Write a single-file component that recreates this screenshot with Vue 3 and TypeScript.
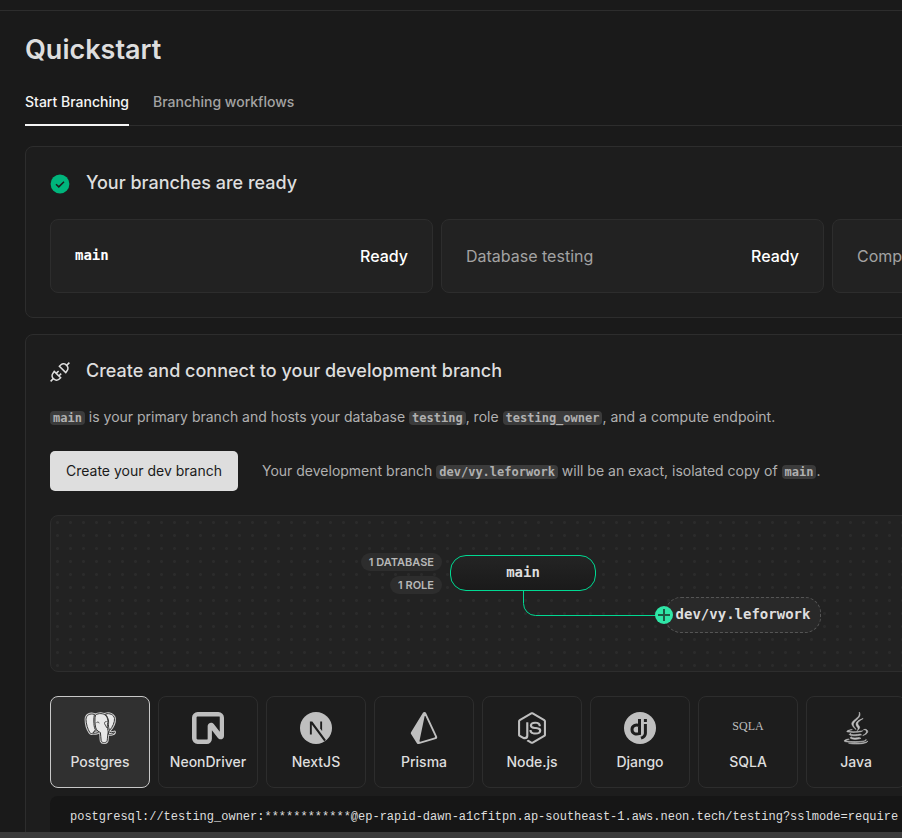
<script setup lang="ts">
import { ref } from 'vue'

interface BranchStatus {
  label: string
  mono: boolean
  status: string
}

const statuses: BranchStatus[] = [
  { label: 'main', mono: true, status: 'Ready' },
  { label: 'Database testing', mono: false, status: 'Ready' },
  { label: 'Compute', mono: false, status: 'Ready' },
]

const tabs: string[] = ['Start Branching', 'Branching workflows']
const activeTab = ref(tabs[0])

const drivers: string[] = ['Postgres', 'NeonDriver', 'NextJS', 'Prisma', 'Node.js', 'Django', 'SQLA', 'Java']
const activeDriver = ref(drivers[0])

const connection =
  'postgresql://testing_owner:************@ep-rapid-dawn-a1cfitpn.ap-southeast-1.aws.neon.tech/testing?sslmode=require'
</script>

<template>
  <div class="page">
    <header class="topbar"></header>
    <main class="viewport">
      <div class="content">
        <h1>Quickstart</h1>
        <nav class="tabs">
          <button
            v-for="tab in tabs"
            :key="tab"
            type="button"
            class="tab"
            :class="{ active: tab === activeTab }"
            @click="activeTab = tab"
          >{{ tab }}</button>
        </nav>

        <section class="panel">
          <h2>
            <svg class="head-icon" viewBox="0 0 20 20" aria-hidden="true">
              <circle cx="10" cy="11" r="9.4" fill="#00b57c" />
              <path d="M6 11.2l2.8 2.7 5.2-5.2" fill="none" stroke="#1c1c1c" stroke-width="1.5" />
            </svg>
            Your branches are ready
          </h2>
          <div class="statuses">
            <div v-for="item in statuses" :key="item.label" class="status">
              <span :class="item.mono ? 'mono-label' : 'label'">{{ item.label }}</span>
              <span class="state">{{ item.status }}</span>
            </div>
          </div>
        </section>

        <section class="panel">
          <h2>
            <svg class="head-icon" viewBox="0 0 20 20" fill="none" stroke="#dedede" stroke-width="1.5" aria-hidden="true">
              <g transform="translate(0 1)">
                <path d="M.6 19.4l3-3M16.4 3.6l3-3" />
                <path d="M4.2 9.4l6.400 6.400-1.600 1.400a3.800 3.800 0 0 1-5.400-.4 3.800 3.800 0 0 1-.6-5.600z" />
                <path d="M15.800 10.600L9.400 4.200l1.600-1.400a3.800 3.800 0 0 1 5.400.4 3.800 3.800 0 0 1 .6 5.600z" />
                <path d="M6.200 11.400l2.400-2.400M8.800 14l2.400-2.400" />
              </g>
            </svg>
            Create and connect to your development branch
          </h2>
          <p class="intro">
            <code>main</code> is your primary branch and hosts your database <code>testing</code>, role
            <code>testing_owner</code>, and a compute endpoint.
          </p>
          <div class="action">
            <button type="button" class="primary">Create your dev branch</button>
            <p>
              Your development branch <code>dev/vy.leforwork</code> will be an exact, isolated copy of
              <code>main</code>.
            </p>
          </div>

          <div class="diagram">
            <svg class="edge" viewBox="0 0 142 28" aria-hidden="true">
              <path d="M.5 0v12.500a12 12 0 0 0 12 12H142" fill="none" stroke="#00d992" />
            </svg>
            <div class="badges">
              <span class="badge">1 DATABASE</span>
              <span class="badge">1 ROLE</span>
            </div>
            <div class="node root">main</div>
            <div class="node dev">dev/vy.leforwork</div>
            <svg class="plus" viewBox="0 0 18 18" aria-hidden="true">
              <circle cx="9" cy="9" r="9" fill="#2fe6a7" />
              <path d="M9 3v12M3 9h12" stroke="#1f5a45" stroke-width="2" />
            </svg>
          </div>

          <div class="drivers">
            <button
              v-for="driver in drivers"
              :key="driver"
              type="button"
              class="driver"
              :class="{ selected: driver === activeDriver }"
              @click="activeDriver = driver"
            >
              <svg v-if="driver === 'Postgres'" viewBox="0 0 32 32" aria-hidden="true">
                <defs>
                  <g id="elephant">
                    <path d="M10.500 2.500C6 1 2 3 2 7.500c0 4 1.800 10 3.800 13 1.200 1.600 2.600 1.200 3.800-.3l1.800-2.400C9.800 15 10 12 9.800 9c0-3 .2-4.500.7-6.500z" />
                    <path d="M21.500 2c4-1.200 8.500.8 9 4.500.3 3.500-1.800 8.500-5 12-.6-2-1.200-3.800-1-6 .3-3 .2-6-3-10.500z" />
                    <path d="M24.500 19.500c2 1.500 4 1.300 6 .5.400 1.500-3.500 2.800-6 2.300z" />
                    <path d="M10.500 19.500c1.200-.6 3-1 4.500-.2.4 1.200-2.700 2.200-6 1.900z" />
                    <path d="M11.500 3c3-2 8-2 10.500.8 2.200 2.600 2.200 6 1.400 9-.5 2.500.6 5 .8 7.200-.6 2-.6 5.500-1 8.500-.3 2.500-5 3-6 .4-.6-2.500-.2-6-.8-8.400-1.400-.8-3.600-1.600-4.600-4.500-.9-3.600-1.300-10-.3-13z" />
                  </g>
                </defs>
                <use href="#elephant" fill="#e8e8e8" stroke="#d0d0d0" stroke-width="2.800" stroke-linejoin="round" />
                <use href="#elephant" fill="#e8e8e8" stroke="#383838" stroke-width="1" stroke-linejoin="round" />
                <path d="M12.500 10.500c1.300-.8 2.500-.3 2.700.8M22.600 9.500c-1.400.1-2.300.8-2.100 2 .4 1.800 1.800 2.900 2.600 4.500" fill="none" stroke="#383838" stroke-width=".9" />
              </svg>
              <svg v-else-if="driver === 'NeonDriver'" viewBox="0 0 32 32" fill="#bfbfbf" aria-hidden="true">
                <path fill-rule="evenodd" d="M0 5.650A5.650 5.650 0 0 1 5.650 0h20.700A5.650 5.650 0 0 1 32 5.650v18.300c0 3.200-4.100 4.600-6.100 2.100l-6-7.700v8.500A5.100 5.100 0 0 1 14.800 32H5.650A5.650 5.650 0 0 1 0 26.350zM5.650 4.500c-.6 0-1.100.5-1.100 1.100v20.700c0 .6.5 1.100 1.100 1.100h9.600c.3 0 .4-.2.4-.5V14.100c0-3.200 4.100-4.600 6.100-2.100l6 7.700V5.650c0-.6.050-1.150-.6-1.150z" />
              </svg>
              <svg v-else-if="driver === 'NextJS'" viewBox="0 0 32 32" aria-hidden="true">
                <circle cx="16" cy="16" r="16" fill="#bfbfbf" />
                <path d="M9.900 9.600h2.400l13.600 18.300-1.700 1.300L11.800 12.600v10H9.900z" fill="#1e1e1e" />
                <path d="M20.200 9.600h1.900v9.400l-1.900-2.600z" fill="#1e1e1e" />
              </svg>
              <svg v-else-if="driver === 'Prisma'" viewBox="0 0 24 24" fill="#bfbfbf" aria-hidden="true">
                <path d="M21.8068 18.2848L13.5528.7565c-.207-.4382-.639-.7273-1.1286-.7541-.5023-.0293-.9523.213-1.2062.6253L2.266 15.1271c-.2773.4518-.2718 1.0091.0158 1.4555l4.3759 6.7786c.2608.4046.7127.6388 1.1823.6388.1332 0 .267-.0188.3987-.0577l12.7019-3.7568c.3891-.1151.7072-.3904.8737-.7553s.1633-.7828-.0075-1.1454zm-1.8481.7519L9.1814 22.2242c-.3292.0975-.6448-.1873-.5756-.5194l3.8501-18.4386c.072-.3448.5486-.3996.699-.0803l7.1288 15.1382c.1344.2856-.019.6224-.325.7128z" />
              </svg>
              <svg v-else-if="driver === 'Node.js'" viewBox="0 0 448 512" fill="#bfbfbf" aria-hidden="true">
                <path d="M224 508c-6.700 0-13.500-1.800-19.400-5.200l-61.700-36.500c-9.200-5.200-4.700-7-1.700-8 12.300-4.300 14.800-5.200 27.900-12.700 1.400-.8 3.200-.5 4.600.4l47.400 28.100c1.700 1 4.100 1 5.700 0l184.700-106.600c1.700-1 2.800-3 2.800-5V149.300c0-2.100-1.100-4-2.900-5.100L226.800 37.700c-1.700-1-4-1-5.700 0L36.600 144.300c-1.800 1-2.900 3-2.900 5.100v213.100c0 2 1.100 4 2.900 4.900l50.600 29.200c27.500 13.700 44.300-2.400 44.300-18.700V167.500c0-3 2.400-5.300 5.400-5.300h23.400c2.900 0 5.400 2.300 5.400 5.300V378c0 36.600-20 57.600-54.700 57.600-10.700 0-19.100 0-42.500-11.600l-48.400-27.900C8.100 389.200.7 376.300.7 362.400V149.300c0-13.800 7.400-26.800 19.400-33.700L204.600 9c11.700-6.600 27.200-6.600 38.800 0l184.700 106.700c12 6.900 19.400 19.800 19.400 33.700v213.100c0 13.800-7.400 26.700-19.400 33.700L243.400 502.800c-5.900 3.400-12.600 5.200-19.400 5.200zm149.100-210.100c0-39.900-27-50.500-83.700-58-57.400-7.600-63.200-11.500-63.200-24.900 0-11.100 4.900-25.900 47.400-25.900 37.900 0 51.900 8.200 57.700 33.800.5 2.400 2.700 4.200 5.200 4.200h24c1.500 0 2.900-.6 3.900-1.700s1.500-2.600 1.400-4.100c-3.700-44.100-33-64.600-92.200-64.600-52.700 0-84.100 22.200-84.100 59.500 0 40.400 31.300 51.600 81.800 56.600 60.500 5.900 65.200 14.800 65.200 26.700 0 20.600-16.600 29.400-55.500 29.400-48.900 0-59.600-12.300-63.200-36.600-.4-2.600-2.600-4.500-5.300-4.500h-23.900c-3 0-5.300 2.400-5.300 5.300 0 31.100 16.900 68.200 97.800 68.200 58.400-.1 92-23.200 92-63.400z" />
              </svg>
              <svg v-else-if="driver === 'Django'" viewBox="0 0 32 32" aria-hidden="true">
                <circle cx="16" cy="16" r="16" fill="#bfbfbf" />
                <g fill="none" stroke="#1e1e1e" stroke-width="3">
                  <path d="M15.500 7v14.600c-3.500.9-7.500.4-7.500-4.100 0-4 3.600-5.200 7.500-4" />
                  <path d="M21.400 12v9.200c0 2.900-1.400 3.900-4.400 5" />
                  <path d="M21.400 7v3" />
                </g>
              </svg>
              <svg v-else-if="driver === 'SQLA'" viewBox="0 0 32 32" aria-hidden="true">
                <text x="16" y="18" text-anchor="middle" class="sqla">SQLA</text>
              </svg>
              <svg v-else viewBox="0 0 384 512" fill="#bfbfbf" stroke="#bfbfbf" stroke-width="9" aria-hidden="true">
                <path d="M277.740 312.900c9.800-6.700 23.400-12.500 23.400-12.500s-38.700 7-77.200 10.200c-47.100 3.900-97.700 4.700-123.100 1.300-60.100-8 33-30.100 33-30.100s-36.100-2.400-80.600 19c-52.500 25.400 130 37 224.500 12.100zm-85.400-32.100c-19-42.700-83.100-80.200 0-145.800C296 53.200 242.840 0 242.840 0c21.500 84.500-75.600 110.100-110.700 162.600-23.900 35.900 11.700 74.400 60.200 118.200zm114.600-176.200c.1 0-175.200 43.800-91.500 140.200 24.700 28.400-6.500 54-6.500 54s62.700-32.400 33.900-72.900c-26.900-37.800-47.500-56.600 64.100-121.300zm-6.100 270.500a12.190 12.190 0 0 1-2 2.600c128.300-33.700 81.100-118.900 19.800-97.300a17.330 17.330 0 0 0-8.200 6.300 70.450 70.450 0 0 1 11-3c31-6.500 75.500 41.500-20.600 91.400zM348 437.400s14.500 11.900-15.900 21.200c-57.900 17.500-240.800 22.800-291.600.7-18.300-7.900 16-19 26.800-21.300 11.200-2.400 17.700-2 17.700-2-20.300-14.300-131.300 28.100-56.400 40.200C232.840 509.400 401 461.300 348 437.400zM124.440 396c-78.700 22 47.900 67.400 148.100 24.500a185.890 185.890 0 0 1-28.200-13.800c-44.700 8.500-65.400 9.100-106 4.500-33.500-3.800-13.900-15.200-13.900-15.200zm179.800 97.200c-78.700 14.800-175.800 13.100-233.300 3.600 0-.1 11.800 9.700 72.400 13.600 92.200 5.900 233.800-3.300 237.100-46.900 0 0-6.400 16.500-76.200 29.700zM260.640 353c-59.200 11.400-93.500 11.100-136.800 6.600-33.500-3.500-11.600-19.700-11.600-19.700-86.800 28.800 48.200 61.400 169.500 25.900a60.370 60.370 0 0 1-21.100-12.800z" />
              </svg>
              <span>{{ driver }}</span>
            </button>
          </div>

          <pre class="connection">{{ connection }}</pre>
        </section>
      </div>
    </main>
    <footer class="strip"></footer>
  </div>
</template>

<style>
body {
  background: #1a1a1a;
}
</style>

<style scoped>
.page {
  --sans: Inter, "Liberation Sans", sans-serif;
  --mono: "DejaVu Sans Mono", "Liberation Mono", monospace;
  --line: #2d2d2d;
  display: flex;
  flex-direction: column;
  height: 100vh;
  overflow: hidden;
  background: #1a1a1a;
  color: #dedede;
  font: 14px/20px var(--sans);
}

.page *,
.page *::before {
  box-sizing: border-box;
}

button {
  margin: 0;
  font: inherit;
  cursor: pointer;
}

h1,
h2,
p,
pre {
  margin: 0;
}

.topbar {
  flex: none;
  height: 11px;
  border-bottom: 1px solid var(--line);
}

.viewport {
  flex: 1;
  min-height: 0;
  overflow: hidden;
}

.content {
  min-width: 1264px;
  padding: 20px 24px 0 25px;
}

h1 {
  font-size: 27px;
  font-weight: 600;
  line-height: 38px;
}

.tabs {
  display: flex;
  gap: 24px;
  margin: 12px 0 20px;
  border-bottom: 1px solid var(--line);
}

.tab {
  height: 45px;
  margin-bottom: -1px;
  padding: 0 0 2px;
  border: 0;
  border-bottom: 2px solid transparent;
  background: none;
  color: #a3a3a3;
  font-weight: 500;
}

.tab.active {
  border-color: #f5f5f5;
  color: #f5f5f5;
}

.panel {
  margin-bottom: 16px;
  padding: 24px;
  border: 1px solid var(--line);
  border-radius: 8px;
  background: #1d1d1d;
}

h2 {
  display: flex;
  align-items: center;
  gap: 16px;
  height: 24px;
  font-size: 18px;
  font-weight: 500;
  line-height: 24px;
}

.head-icon {
  flex: none;
  width: 20px;
  height: 20px;
  overflow: visible;
}

.statuses {
  display: grid;
  grid-template-columns: repeat(3, 1fr);
  gap: 8px;
  margin-top: 24px;
}

.status {
  display: flex;
  align-items: center;
  justify-content: space-between;
  height: 74px;
  padding: 0 24px;
  border: 1px solid var(--line);
  border-radius: 8px;
  background: #222;
  font-size: 16px;
}

.label {
  color: #a3a3a3;
}

.mono-label {
  padding-bottom: 2px;
  color: #fff;
  font: bold 14px/20px var(--mono);
}

.state {
  color: #fff;
  font-weight: 500;
}

.intro,
.action {
  color: #b0b0b0;
}

.intro {
  margin-top: 24px;
}

code {
  padding: 0 3px;
  border-radius: 4px;
  background: #3b3b3b;
  font: bold 12px/16px var(--mono);
}

.action {
  display: flex;
  align-items: center;
  gap: 24px;
  margin-top: 24px;
}

.primary {
  height: 40px;
  padding: 0 16px;
  border: 0;
  border-radius: 5px;
  background: #dedede;
  color: #1a1a1a;
}

.diagram {
  position: relative;
  height: 157px;
  margin-top: 24px;
  border: 1px solid var(--line);
  border-radius: 8px;
  background: radial-gradient(circle, #2b2b2b 1px, transparent 2px) 0 0 / 13px 13px #222;
}

.node {
  position: absolute;
  display: flex;
  align-items: center;
  justify-content: center;
  height: 36px;
  padding-bottom: 2px;
  border-radius: 16px;
  font: bold 14px/20px var(--mono);
}

.root {
  left: 399px;
  top: 39px;
  width: 146px;
  border: 1px solid #00d992;
  background: linear-gradient(#242424, #1a1a1a);
}

.dev {
  left: 614px;
  top: 81px;
  width: 156px;
  border: 1px dashed #555;
  background: #292929;
}

.badges {
  position: absolute;
  left: 299px;
  top: 37px;
  display: flex;
  flex-direction: column;
  align-items: flex-end;
  gap: 5px;
  width: 92px;
}

.badge {
  padding: 0 8px;
  border-radius: 9px;
  background: #2d2d2d;
  color: #b8b8b8;
  font-size: 11px;
  font-weight: 600;
  line-height: 18px;
  white-space: nowrap;
}

.edge {
  position: absolute;
  left: 472px;
  top: 75px;
  width: 142px;
  height: 28px;
}

.plus {
  position: absolute;
  left: 604px;
  top: 90px;
  width: 18px;
  height: 18px;
}

.drivers {
  display: flex;
  gap: 8px;
  margin-top: 24px;
}

.driver {
  display: flex;
  flex-direction: column;
  align-items: center;
  gap: 8px;
  width: 100px;
  height: 92px;
  padding: 15px 0 0;
  border: 1px solid var(--line);
  border-radius: 8px;
  background: transparent;
  color: #dedede;
  font-weight: 500;
}

.driver.selected {
  border-color: #c8c8c8;
  background: #303030;
}

.driver svg {
  width: 32px;
  height: 32px;
  overflow: visible;
}

.sqla {
  fill: #bfbfbf;
  font: 12px "Liberation Serif", serif;
}

.connection {
  margin-top: 8px;
  padding: 12px 20px;
  border-radius: 8px;
  background: #161616;
  font: 12px/18px "Liberation Mono", monospace;
}

.strip {
  flex: none;
  height: 6px;
  background: #3b3b3b;
}
</style>
